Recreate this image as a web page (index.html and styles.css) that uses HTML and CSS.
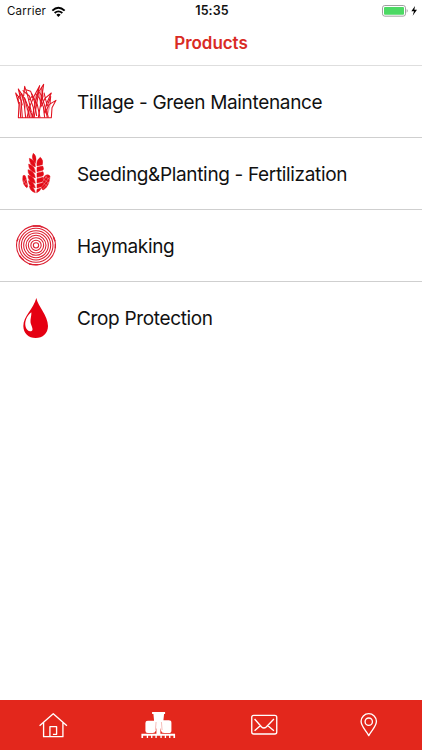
FILE: index.html
```html
<!DOCTYPE html>
<html lang="en">
<head>
<meta charset="utf-8">
<title>Products</title>
<link rel="stylesheet" href="styles.css">
</head>
<body>
<div class="screen">
  <header class="header">
    <div class="status">
      <div class="carrier"><span>Carrier</span>
        <svg class="wifi" viewBox="0 0 45 33"><path d="M2 12Q22 -7 43 12L39 16Q22 1 6 16ZM9 19Q22 8 36 19L32 23Q22 15 13 23ZM16 26Q22 21 29 26L22 33Z"/></svg>
      </div>
      <div class="time">15:35</div>
      <div class="power">
        <svg class="battery" viewBox="0 0 105 36"><rect x="1.5" y="1.5" width="69" height="32" rx="7" fill="#fff" stroke="#a0a0a0" stroke-width="3"/><rect x="6" y="6" width="60" height="23" rx="3" fill="#4cd964"/><path d="M74 12q6 5 0 11z" fill="#999"/><path d="M99 3L88 19h8l-4 13 13-18h-8z" fill="#000"/></svg>
      </div>
    </div>
    <h1 class="title">Products</h1>
  </header>
  <main class="list">
    <div class="row">
      <svg class="icon" viewBox="0 0 168 150">
        <g fill="none" stroke="#e1121f" stroke-width="3.2" stroke-linejoin="round">
          <path d="M30 125H131M31 125L33 86L23 51L39 72L43 125M33 86L30 66L41 53L48 80L53 125"/>
          <path d="M43 88L31 39L51 70L65 125M47 60L50 31L58 55L70 108"/>
          <path d="M44 43L64 60L76 95L78 125M54 41L68 46L79 76L86 120"/>
          <path d="M57 125L65 92L78 61L95 29L84 72L72 125M63 72L72 61L77 67"/>
          <path d="M78 125L86 85L92 48L107 25L101 66L91 125"/>
          <path d="M82 53L94 66L106 92L110 125M88 42L100 57L110 89L118 125"/>
          <path d="M98 94L111 67L130 51L116 82L109 110M108 50L114 75L118 91"/>
          <path d="M110 112L124 85L144 73L132 95L130 125M118 89L128 61L126 83"/>
          <path d="M35 78L38 125M49 64L60 91L76 125M70 51L88 86L96 125M101 33L105 61L98 84M116 104L121 125"/>
        </g>
        <path fill="#e1121f" opacity=".45" d="M31 39L52 71L56 105L43 72ZM95 29L84 72L75 107L80 64ZM101 33L105 60L96 87L92 59ZM57 125L65 91L75 125ZM110 112L123 87L130 77L121 113Z"/>
      </svg>
      <span class="label">Tillage - Green Maintenance</span>
    </div>
    <div class="row">
      <svg class="icon" viewBox="0 0 168 150">
        <g fill="#e30b17" stroke="#e30b17" stroke-width="1.5">
          <path d="M76 16Q85 23 84 36L82 46Q68 31 76 16Z"/>
          <path d="M64 31Q82 36 82 57Q64 52 64 31ZM62 48Q81 53 82 74Q61 68 62 48ZM60 65Q80 69 82 90Q59 84 60 65ZM60 82Q80 86 82 106Q59 102 60 82ZM61 98Q79 102 82 120Q63 117 61 98ZM64 113Q78 116 82 134Q66 130 64 113Z"/>
          <path d="M97 28Q107 36 103 50L87 54Q84 37 97 28ZM87 58L104 54Q109 64 104 67L87 71ZM87 75L105 71Q109 80 104 84L87 88ZM87 92L105 88Q108 97 103 101L87 105ZM87 109L103 105Q105 113 100 116L87 120ZM87 124L99 120Q97 130 86 134Z"/>
          <path d="M45 83Q52 78 54 90L58 109Q61 119 56 119Q47 114 44 96Z"/>
          <path d="M108 86Q117 76 126 84L124 99Q119 119 105 126Q98 123 101 109Z"/>
        </g>
        <path d="M42 94L58 112M45 106L55 93M47 114L59 103M104 92L124 107M102 101L120 117M110 86L127 95M102 116L124 88M103 124L128 96M101 105L117 83" stroke="#fff" stroke-width="1.4" opacity=".6"/>
      </svg>
      <span class="label">Seeding&amp;Planting - Fertilization</span>
    </div>
    <div class="row">
      <svg class="icon" viewBox="0 0 168 150">
        <g fill="none" stroke="#dc1f31" stroke-width="3.2">
          <circle cx="84" cy="76" r="58.5" stroke-width="3.4"/>
          <circle cx="84" cy="76" r="51"/><circle cx="84" cy="76" r="44"/>
          <circle cx="84" cy="76" r="37"/><circle cx="84" cy="76" r="30"/>
          <circle cx="84" cy="76" r="23"/><circle cx="84" cy="76" r="15.5"/>
          <circle cx="84" cy="76" r="8"/>
          <path d="M27 64L30 56M34 106L40 114L47 120M63 132L74 134L91 134M74 18L94 18L103 21M136 51L141 64M142 73V85" stroke-width="4"/>
        </g>
      </svg>
      <span class="label">Haymaking</span>
    </div>
    <div class="row">
      <svg class="icon drop" viewBox="0 0 168 162">
        <path fill="#e50012" d="M85 24C90 49 120 77 120 108C120 130 104 144 83 144C62 144 46 130 46 108C46 79 76 57 85 24Z"/>
        <path fill="#fff" d="M70 67C55 79 49 96 53 111C56 122 65 126 72 122C76 119 72 112 69 103C65 90 71 79 70 67Z"/>
      </svg>
      <span class="label">Crop Protection</span>
    </div>
  </main>
  <nav class="tabs">
    <a class="tab"><svg viewBox="104.25 30 108 150"><path class="line" d="M118 107L159 71L200 107M130 98V140H188V98M149 139V110H169V133H158"/></svg></a>
    <a class="tab"><svg viewBox="420.75 30 108 150"><path fill="#fff" d="M457 66H496V72H493L491 91H507Q515 91 515 98V122Q515 129 507 129H493Q485 129 484 122L482 113V131H526V144H521V137H512V144H508V137H499V144H495V137H486V144H482V137H471V144H467V137H458V144H454V137H445V144H441V137H430V144H425V131H470V113L468 122Q466 129 459 129H444Q437 129 437 122V99Q437 92 444 92H463L461 72H457Z"/><path d="M469 96L467 120M485 96L487 120" stroke="#e3271c" stroke-width="1.5" opacity=".6"/><path d="M476 107V134" stroke="#fff" stroke-width="5"/></svg></a>
    <a class="tab"><svg viewBox="104.25 30 108 150"><rect class="line" x="121.5" y="76" width="75" height="56" rx="6"/><path class="line" d="M130 87L151 111Q158 117 165 111L188 87M130 122L147 107M188 122L170 107"/></svg></a>
    <a class="tab"><svg viewBox="420.75 30 108 150"><path class="line" d="M474 137C466 121 451 110 451 94A23 23 0 0 1 497 94C497 110 482 121 474 137Z"/><circle class="line" cx="474" cy="95" r="11"/></svg></a>
  </nav>
</div>
</body>
</html>
```
FILE: styles.css
```css
* { box-sizing: border-box; }
body { margin: 0; background: #fff; font-family: Inter, "Liberation Sans", sans-serif; color: #111; }
.screen { width: 422px; height: 750px; display: flex; flex-direction: column; }
.header { height: 66px; border-bottom: 1px solid #dedede; }
.status { height: 22px; display: grid; grid-template-columns: 1fr auto 1fr; align-items: center; padding: 0 5px 0 7px; font-size: 11.5px; line-height: 22px; }
.carrier { display: flex; align-items: center; gap: 5px; letter-spacing: .2px; }
.wifi { width: 15px; height: 11px; }
.time { font-size: 12.5px; font-weight: 600; letter-spacing: .1px; }
.power { display: flex; justify-content: flex-end; }
.battery { width: 35px; height: 12px; }
.title { margin: 0; text-align: center; color: #d92b24; font-size: 17px; line-height: 43px; font-weight: 600; letter-spacing: -.05px; }
.list { flex: 1; }
.row { height: 72px; display: flex; align-items: flex-start; border-bottom: 1px solid #cfcfcf; }
.row:last-child { border-bottom: 0; }
.icon { width: 56px; height: 50px; margin: 10px 13px 0 8px; flex: none; }
.drop { height: 54px; margin-top: 8px; }
.label { font-size: 19px; line-height: 73px; letter-spacing: -.34px; white-space: nowrap; }
.tabs { height: 50px; display: flex; background: #e3271c; }
.tab { flex: 1; display: flex; justify-content: center; }
.tab svg { width: 36px; height: 50px; }
.line { fill: none; stroke: #fff; stroke-width: 4; stroke-linejoin: round; }
```
